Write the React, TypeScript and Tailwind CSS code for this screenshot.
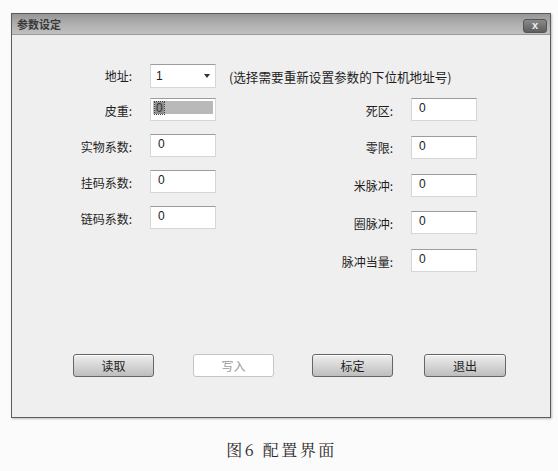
import React from "react";

const cjk = { fontFamily: '"Noto Sans CJK SC", "Liberation Sans", sans-serif' };
const latin = { fontFamily: '"Liberation Sans", "Noto Sans CJK SC", sans-serif' };
const serif = { fontFamily: '"Noto Serif CJK SC", "Liberation Serif", "Noto Sans CJK SC", serif' };

const Field = ({ value = "0", focused = false }: { value?: string; focused?: boolean }) => (
    <div className="w-[66px] h-[23px] bg-white border border-[#d6d6d6] border-t-[#9c9c9c] px-[2px] pt-[2px]">
        {focused ? (
            <div className="h-[13px] bg-[#b9b9b9] flex items-center">
                <span className="ml-[2px] px-[1px] leading-[12px] text-[12px] text-[#333] bg-[#8e8e8e] outline outline-1 outline-dotted outline-[#444]" style={latin}>
                    {value}
                </span>
            </div>
        ) : (
            <span className="block pl-[5px] text-[12px] leading-[15px] text-[#222]" style={latin}>
                {value}
            </span>
        )}
    </div>
);

const Row = ({ label, labelW, focused }: { label: string; labelW: string; focused?: boolean }) => (
    <div className="flex items-center h-[23px]">
        <span className={`${labelW} text-right text-[12px] text-[#1e1e1e] leading-none mt-[2px]`} style={cjk}>
            {label}
        </span>
        <div className="ml-[18px]">
            <Field focused={focused} />
        </div>
    </div>
);

const Btn = ({ label, disabled = false, cls = "" }: { label: string; disabled?: boolean; cls?: string }) => (
    <button
        className={`${cls} h-[23px] rounded-[3px] border text-[12px] leading-none ${
            disabled
                ? "bg-white border-[#c4c4c4] text-[#9a9a9a]"
                : "border-[#666] bg-gradient-to-b from-[#efefef] via-[#d6d6d6] to-[#bdbdbd] text-[#1e1e1e] shadow-[inset_0_1px_0_#ffffff]"
        }`}
        style={cjk}
    >
        {label}
    </button>
);

export default function App() {
    return (
        <div className="w-[558px] h-[471px] bg-[#fbfbfb] pt-[13px] overflow-hidden">
            {/* dialog window */}
            <div className="ml-[11px] w-[540px] h-[405px] border border-[#5c5c5c] flex flex-col shadow-[1px_1px_2px_rgba(0,0,0,0.25)]">
                {/* title bar */}
                <div className="h-[21px] flex items-center justify-between pl-[5px] pr-[3px] bg-gradient-to-b from-[#979797] via-[#afafaf] to-[#c0c0c0] border-b border-[#9a9a9a]">
                    <span className="text-[11px] font-bold text-[#3a3a3a] leading-none" style={cjk}>
                        参数设定
                    </span>
                    <div className="mt-[3px] w-[24px] h-[14px] rounded-[3px] border border-[#555] bg-gradient-to-b from-[#8a8a8a] to-[#5e5e5e] flex items-center justify-center">
                        <span className="text-[11px] font-bold text-[#eee] leading-none" style={latin}>
                            x
                        </span>
                    </div>
                </div>

                {/* body */}
                <div className="flex-1 bg-[#efefef] flex flex-col">
                    {/* address row */}
                    <div className="mt-[29px] flex items-center h-[24px]">
                        <span className="w-[120px] text-right text-[12px] text-[#1e1e1e] leading-none" style={cjk}>
                            地址:
                        </span>
                        <div className="ml-[18px] w-[66px] h-[24px] bg-white border border-[#d6d6d6] border-t-[#9c9c9c] flex items-center justify-between pl-[5px] pr-[5px]">
                            <span className="text-[12px] text-[#222]" style={latin}>
                                1
                            </span>
                            <span className="w-0 h-0 border-l-[3px] border-r-[3px] border-t-[4px] border-l-transparent border-r-transparent border-t-[#333]" />
                        </div>
                        <span className="ml-[13px] mt-[3px] text-[12.6px] text-[#1e1e1e] leading-none" style={cjk}>
                            (选择需要重新设置参数的下位机地址号)
                        </span>
                    </div>

                    {/* fields */}
                    <div className="mt-[10px] flex items-start">
                        <div className="w-[204px] flex flex-col gap-[13px]">
                            <Row label="皮重:" labelW="w-[120px]" focused />
                            <Row label="实物系数:" labelW="w-[120px]" />
                            <Row label="挂码系数:" labelW="w-[120px]" />
                            <Row label="链码系数:" labelW="w-[120px]" />
                        </div>
                        <div className="flex flex-col gap-[14.75px]">
                            <Row label="死区:" labelW="w-[177px]" />
                            <Row label="零限:" labelW="w-[177px]" />
                            <Row label="米脉冲:" labelW="w-[177px]" />
                            <Row label="圈脉冲:" labelW="w-[177px]" />
                            <Row label="脉冲当量:" labelW="w-[177px]" />
                        </div>
                    </div>

                    {/* buttons */}
                    <div className="mt-[82px] flex">
                        <Btn label="读取" cls="ml-[61px] w-[81px]" />
                        <Btn label="写入" disabled cls="ml-[39px] w-[81px]" />
                        <Btn label="标定" cls="ml-[38px] w-[81px]" />
                        <Btn label="退出" cls="ml-[31px] w-[82px]" />
                    </div>
                </div>
            </div>

            {/* caption */}
            <p className="mt-[24px] pl-[5px] text-center text-[16px] leading-[16px] tracking-[2.5px] text-[#2a2a2a]" style={serif}>
                图6 配置界面
            </p>
        </div>
    );
}
